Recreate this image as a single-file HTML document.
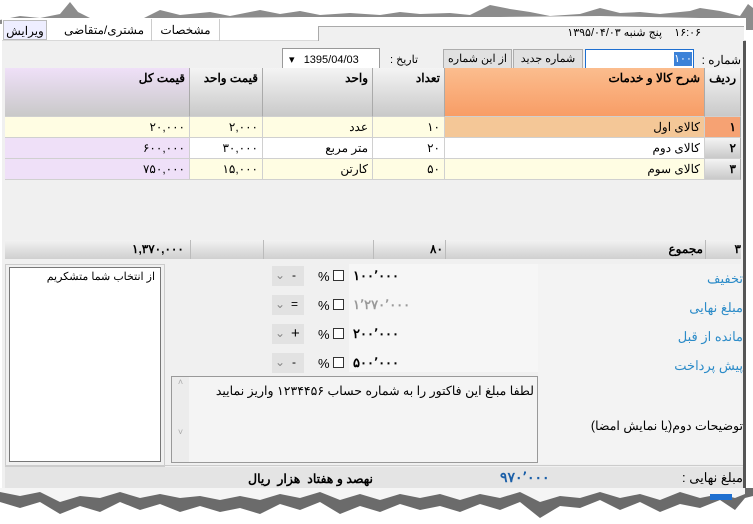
<!DOCTYPE html>
<html><head><meta charset="utf-8"><style>
*{margin:0;padding:0;box-sizing:border-box}
body{width:753px;height:524px;background:#fff;position:relative;overflow:hidden;font-family:"Liberation Sans","Noto Sans CJK SC",sans-serif;font-size:12px;color:#000}
.a{position:absolute}
.t{position:absolute;white-space:nowrap;direction:rtl}
.c{position:absolute;border-right:1px solid #d0d0d0;border-bottom:1px solid #d0d0d0;direction:rtl;text-align:right;padding:3px 4px 0 0;white-space:nowrap}
.h{background:linear-gradient(#f4f4f4,#c9c9c9);font-weight:bold;border-right:1px solid #aaa}
.btn{position:absolute;background:#e1e1e1;border:1px solid #adadad;text-align:center;direction:rtl;font-size:11px;padding-top:2px}
.lbl{position:absolute;right:10px;color:#2b8bc8;direction:rtl;font-size:13px}
.cb{position:absolute;width:11px;height:11px;border:1px solid #333;background:#fff}
.num{position:absolute;font-weight:bold;font-size:13px;letter-spacing:1px}
.dd{position:absolute;width:32px;height:20px;background:#e2e2e2;font-size:12px}
</style></head><body>
<svg class="a" style="left:0;top:0" width="753" height="30"><polygon points="0,20 20,16 40,18 60,14 70,2 78,12 90,18 140,20 160,10 180,15 210,12 230,16 260,10 280,14 300,11 320,15 350,13 380,15 400,12 420,14 450,13 470,15 490,5 510,9 530,12 550,16 580,14 600,8 620,13 640,12 660,14 690,11 700,8 720,11 740,16 748,4 753,8 753,30 0,30" fill="#8c8c8c"/><polygon points="0,24 40,22 80,22 120,20 200,18 300,17 400,17 500,17 600,16 700,18 745,20 745,30 0,30" fill="#fff"/></svg>
<div class="a" style="left:2px;top:18px;width:744px;height:476px;background:#f0f0f0;border-right:3px solid #555"></div>
<div class="a" style="left:2px;top:18px;width:744px;height:23px;background:#fff;border-bottom:1px solid #d9d9d9"></div>
<div class="t" style="left:3px;top:20px;width:44px;height:20px;border:1px solid #bbb;background:#eef;text-align:center;padding-top:3px">ویرایش</div>
<div class="t" style="left:57px;top:19px;width:95px;height:22px;border-right:1px solid #ccc;text-align:center;padding-top:4px">مشتری/متقاضی</div>
<div class="t" style="left:152px;top:19px;width:68px;height:22px;border-right:1px solid #ccc;text-align:center;padding-top:4px">مشخصات</div>
<div class="a" style="left:318px;top:26px;width:426px;height:15px;background:#f0f0f0;border-top:1px solid #aaa;border-left:1px solid #aaa"></div>
<div class="t" style="right:52px;top:26px;font-size:11px">۱۶:۰۶&nbsp;&nbsp;&nbsp; پنج شنبه ۱۳۹۵/۰۴/۰۳</div>
<div class="t" style="right:12px;top:53px;font-size:12px">شماره :</div>
<div class="a" style="left:585px;top:49px;width:109px;height:20px;background:#fff;border:1px solid #1e6fd0"></div>
<div class="a" style="left:674px;top:52px;width:18px;height:14px;background:#3c82d8;color:#fff;font-size:11px;text-align:center">۱۰۰</div>
<div class="btn" style="left:513px;top:49px;width:70px;height:20px">شماره جدید</div>
<div class="btn" style="left:443px;top:49px;width:69px;height:20px">از این شماره</div>
<div class="t" style="left:390px;top:53px;font-size:11px">تاریخ :</div>
<div class="a" style="left:282px;top:48px;width:98px;height:22px;background:#fff;border:1px solid #999;font-size:11px;padding:4px 0 0 6px">▾&nbsp;&nbsp;&nbsp;1395/04/03</div>
<div class="c h" style="left:705px;top:68px;width:36px;height:49px">ردیف</div>
<div class="c h" style="left:445px;top:68px;width:260px;height:49px;background:linear-gradient(#fbbd8e,#f89d66)">شرح کالا و خدمات</div>
<div class="c h" style="left:373px;top:68px;width:72px;height:49px">تعداد</div>
<div class="c h" style="left:263px;top:68px;width:110px;height:49px">واحد</div>
<div class="c h" style="left:190px;top:68px;width:73px;height:49px">قیمت واحد</div>
<div class="c h" style="left:5px;top:68px;width:185px;height:49px;background:linear-gradient(#efe0f8,#c9c9c9)">قیمت کل</div>
<div class="c h" style="left:705px;top:117px;width:36px;height:21px;background:#f6a273">۱</div>
<div class="c" style="left:445px;top:117px;width:260px;height:21px;background:#f4c797">کالای اول</div>
<div class="c" style="left:373px;top:117px;width:72px;height:21px;background:#fffde3">۱۰</div>
<div class="c" style="left:263px;top:117px;width:110px;height:21px;background:#fffde3">عدد</div>
<div class="c" style="left:190px;top:117px;width:73px;height:21px;background:#fffde3">۲,۰۰۰</div>
<div class="c" style="left:5px;top:117px;width:185px;height:21px;background:#fffde3">۲۰,۰۰۰</div>
<div class="c h" style="left:705px;top:138px;width:36px;height:21px">۲</div>
<div class="c" style="left:445px;top:138px;width:260px;height:21px;background:#fff">کالای دوم</div>
<div class="c" style="left:373px;top:138px;width:72px;height:21px;background:#fff">۲۰</div>
<div class="c" style="left:263px;top:138px;width:110px;height:21px;background:#fff">متر مربع</div>
<div class="c" style="left:190px;top:138px;width:73px;height:21px;background:#fff">۳۰,۰۰۰</div>
<div class="c" style="left:5px;top:138px;width:185px;height:21px;background:#efe0f8">۶۰۰,۰۰۰</div>
<div class="c h" style="left:705px;top:159px;width:36px;height:21px">۳</div>
<div class="c" style="left:445px;top:159px;width:260px;height:21px;background:#fffde3">کالای سوم</div>
<div class="c" style="left:373px;top:159px;width:72px;height:21px;background:#fffde3">۵۰</div>
<div class="c" style="left:263px;top:159px;width:110px;height:21px;background:#fffde3">کارتن</div>
<div class="c" style="left:190px;top:159px;width:73px;height:21px;background:#fffde3">۱۵,۰۰۰</div>
<div class="c" style="left:5px;top:159px;width:185px;height:21px;background:#efe0f8">۷۵۰,۰۰۰</div>
<div class="a" style="left:5px;top:240px;width:736px;height:19px;background:linear-gradient(#f2f2f2,#cfcfcf)"></div>
<div class="t" style="right:12px;top:242px;font-weight:bold">۳</div>
<div class="t" style="right:50px;top:242px;font-weight:bold">مجموع</div>
<div class="t" style="left:430px;top:242px;font-weight:bold">۸۰</div>
<div class="t" style="left:132px;top:242px;font-weight:bold">۱,۳۷۰,۰۰۰</div>
<div class="a" style="left:190px;top:240px;width:1px;height:19px;background:#bbb"></div>
<div class="a" style="left:263px;top:240px;width:1px;height:19px;background:#bbb"></div>
<div class="a" style="left:373px;top:240px;width:1px;height:19px;background:#bbb"></div>
<div class="a" style="left:445px;top:240px;width:1px;height:19px;background:#bbb"></div>
<div class="a" style="left:705px;top:240px;width:1px;height:19px;background:#bbb"></div>
<div class="a" style="left:5px;top:264px;width:160px;height:203px;border:1px solid #ccc"></div>
<div class="a" style="left:9px;top:267px;width:152px;height:195px;background:#fff;border:1px solid #777"></div>
<div class="t" style="right:598px;top:270px;font-size:11px">از انتخاب شما متشکریم</div>
<div class="a" style="left:169px;top:264px;width:369px;height:108px;background:#f0f0f0"></div>
<div class="a" style="left:349px;top:264px;width:189px;height:108px;background:#f6f6f6"></div>
<div class="a" style="left:538px;top:264px;width:203px;height:200px;background:#f3f3f3"></div>
<div class="lbl" style="top:271px">تخفیف</div>
<div class="lbl" style="top:300px">مبلغ نهایی</div>
<div class="lbl" style="top:329px">مانده از قبل</div>
<div class="lbl" style="top:358px">پیش پرداخت</div>
<div class="dd" style="left:272px;top:266px"><span class="a" style="left:3px;top:2px;color:#888">⌄</span><span class="a" style="left:20px;top:2px">-</span></div>
<div class="dd" style="left:272px;top:295px"><span class="a" style="left:3px;top:2px;color:#888">⌄</span><span class="a" style="left:19px;top:2px">=</span></div>
<div class="dd" style="left:272px;top:324px"><span class="a" style="left:3px;top:2px;color:#888">⌄</span><span class="a" style="left:19px;top:1px;font-size:15px">+</span></div>
<div class="dd" style="left:272px;top:353px"><span class="a" style="left:3px;top:2px;color:#888">⌄</span><span class="a" style="left:20px;top:2px">-</span></div>
<div class="t" style="left:318px;top:269px;font-size:13px">%</div><div class="cb" style="left:333px;top:270px"></div>
<div class="t" style="left:318px;top:298px;font-size:13px">%</div><div class="cb" style="left:333px;top:299px"></div>
<div class="t" style="left:318px;top:327px;font-size:13px">%</div><div class="cb" style="left:333px;top:328px"></div>
<div class="t" style="left:318px;top:356px;font-size:13px">%</div><div class="cb" style="left:333px;top:357px"></div>
<div class="num" style="left:353px;top:268px">۱۰۰٬۰۰۰</div>
<div class="num" style="left:353px;top:297px;color:#999">۱٬۲۷۰٬۰۰۰</div>
<div class="num" style="left:353px;top:326px">۲۰۰٬۰۰۰</div>
<div class="num" style="left:353px;top:355px">۵۰۰٬۰۰۰</div>
<div class="a" style="left:171px;top:376px;width:367px;height:87px;background:#f4f4f4;border:1px solid #999"></div>
<div class="a" style="left:172px;top:377px;width:17px;height:85px;background:#ececec;color:#aaa;font-size:9px;text-align:center">˄<br><br><br><br><br>˅</div>
<div class="t" style="right:219px;top:383px;font-size:12.5px">لطفا مبلغ این فاکتور را به شماره حساب ۱۲۳۴۴۵۶ واریز نمایید</div>
<div class="t" style="right:10px;top:418px;font-size:12.5px">توضیحات دوم(یا نمایش امضا)</div>
<div class="a" style="left:5px;top:465px;width:738px;height:1px;background:#ccc"></div>
<div class="a" style="left:5px;top:467px;width:738px;height:22px;background:#e4e4e4"></div>
<div class="t" style="right:10px;top:470px;font-size:13px">مبلغ نهایی :</div>
<div class="t" style="left:500px;top:469px;color:#1b5fa8;font-size:14px;font-weight:bold;letter-spacing:1px">۹۷۰٬۰۰۰</div>
<div class="t" style="left:248px;top:471px;font-weight:bold;font-size:12.5px">نهصد و هفتاد&nbsp; هزار&nbsp; ریال</div>
<svg class="a" style="left:0;top:488px" width="753" height="36"><polygon points="0,0 753,0 753,8 745,10 735,22 720,12 700,20 680,16 660,24 640,14 620,22 600,12 580,20 560,18 540,30 520,14 500,22 480,16 460,24 440,18 420,22 400,16 380,24 360,18 340,26 320,14 300,22 280,16 260,26 240,20 220,24 200,18 180,24 160,16 140,22 120,14 100,24 80,18 60,26 40,14 20,20 0,14" fill="#6b6b6b"/><polygon points="0,0 745,0 745,6 735,10 720,6 700,10 680,4 660,12 640,6 620,10 600,4 580,10 560,8 540,14 520,4 500,10 480,6 460,12 440,6 420,10 400,6 380,12 360,6 340,12 320,4 300,10 280,6 260,12 240,8 220,12 200,8 180,10 160,6 140,10 120,4 100,10 80,8 60,14 40,4 20,8 0,4" fill="#f5f5f5"/><rect x="710" y="6" width="22" height="6" fill="#1e6fd0"/></svg>
</body></html>
